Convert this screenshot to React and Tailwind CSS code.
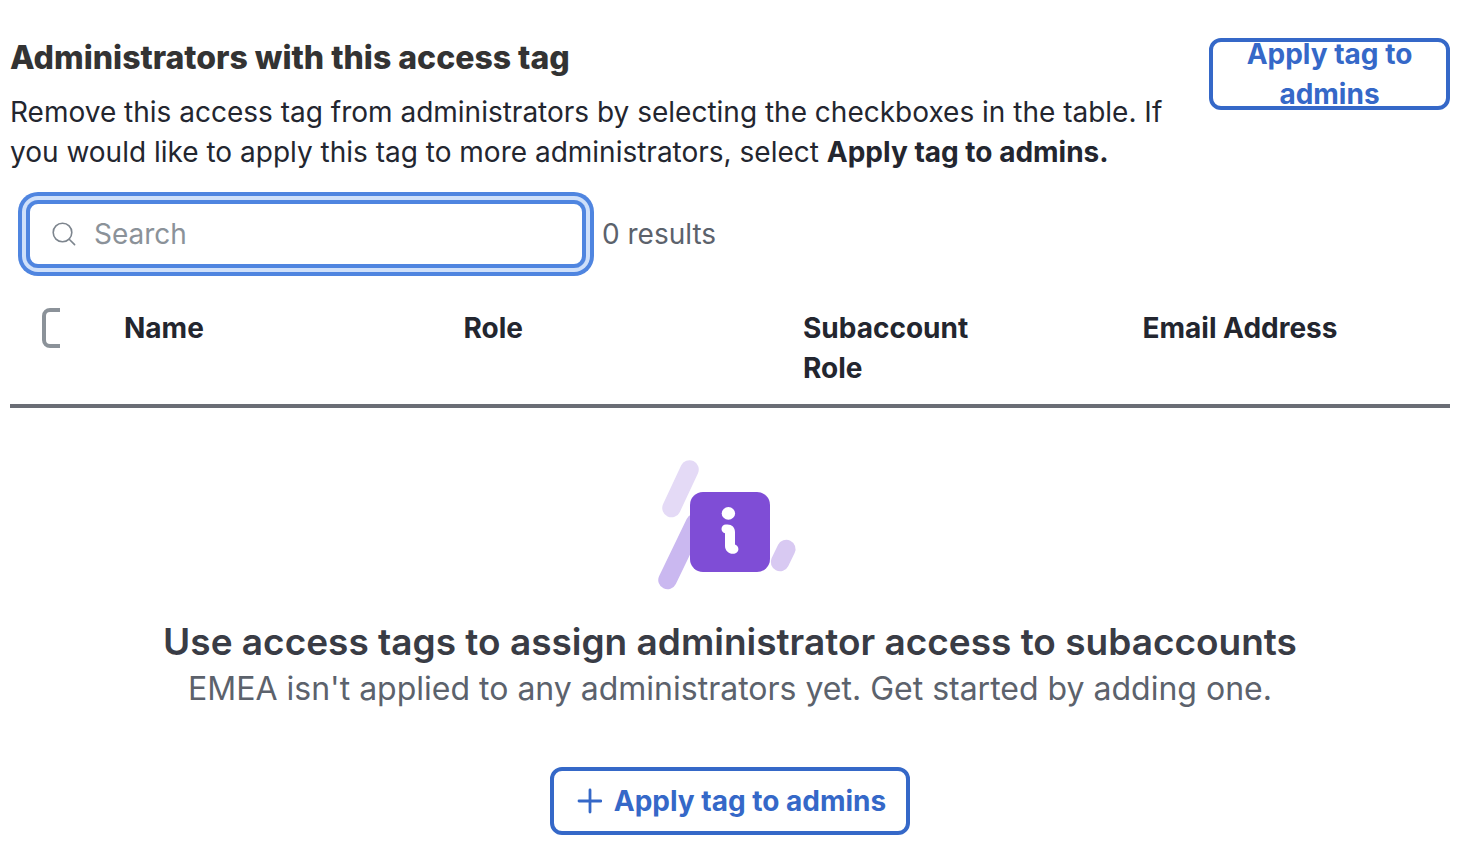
const COLUMNS = ["Name", "Role", "Subaccount Role", "Email Address"];

function SearchIcon() {
  return (
    <svg width="26" height="26" viewBox="0 0 26 26" fill="none" stroke="#7d858e" strokeWidth="1.6" className="shrink-0" aria-hidden="true">
      <circle cx="10.5" cy="11.5" r="9.3" />
      <path d="M17.2 18.2 L22.6 23.6" strokeLinecap="round" />
    </svg>
  );
}

function PlusIcon() {
  return (
    <svg width="26" height="26" viewBox="0 0 26 26" fill="none" stroke="currentColor" strokeWidth="2.8" strokeLinecap="round" aria-hidden="true">
      <path d="M14 2 V24 M3 13 H25" />
    </svg>
  );
}

function InfoIllustration() {
  return (
    <svg width="156" height="132" viewBox="0 0 156 132" fill="none" strokeLinecap="round" aria-hidden="true">
      <path d="M37.5 9.5 L19.5 48" stroke="#e4daf6" strokeWidth="18.5" />
      <path d="M43 63 L15.5 120" stroke="#cab8f0" strokeWidth="18.5" />
      <path d="M134.3 89 L128 102" stroke="#d8c9f2" strokeWidth="18.5" />
      <rect x="38" y="32" width="80" height="80" rx="13" fill="#7f4dd6" />
      <ellipse cx="76.4" cy="53.4" rx="6.7" ry="6.3" fill="#fff" />
      <path
        d="M73.9 64.4 H75.5 C80 64.4 83 67.5 83 72 V84.6 C85 85.2 86.4 87 86.4 89 C86.4 91.8 84 93.8 81 93.8 C76.5 93.8 73 90.5 73 86 V73.3 C71 73 69.5 71.2 69.5 69 C69.5 66.4 71.4 64.4 73.9 64.4 Z"
        fill="#fff"
      />
    </svg>
  );
}

function EmptyState() {
  return (
    <section className="flex flex-col items-center text-center pt-13">
      <InfoIllustration />
      <h3 className="mt-[27px] text-[37px] leading-[46px] font-semibold text-[#393c45]">
        Use access tags to assign administrator access to subaccounts
      </h3>
      <p className="text-[32px] leading-[48px] text-[#5c626c]">
        EMEA isn't applied to any administrators yet. Get started by adding one.
      </p>
      <button
        type="button"
        className="mt-[54px] flex h-17 items-center gap-3 rounded-xl border-4 border-[#3568c8] bg-white pr-5 pl-[22px] text-[28px] leading-10 font-bold text-[#3568c8]"
      >
        <PlusIcon />
        Apply tag to admins
      </button>
    </section>
  );
}

export default function App() {
  return (
    <main className="bg-white pt-[38px] pr-[22px] pb-3 pl-[10px] font-['Inter',sans-serif] text-[28px] leading-10 text-[#23262f]">
      <header className="flex items-start justify-between gap-10">
        <div>
          <h2 className="text-[32px] leading-10 font-extrabold text-[#333333]">Administrators with this access tag</h2>
          <p className="mt-3.5">
            Remove this access tag from administrators by selecting the checkboxes in the table. If you would like to
            apply this tag to more administrators, select <b>Apply tag to admins.</b>
          </p>
        </div>
        <button
          type="button"
          className="flex h-18 w-[241px] shrink-0 items-center justify-center rounded-xl border-4 border-[#3568c8] bg-white px-5 font-bold text-[#3568c8]"
        >
          Apply tag to admins
        </button>
      </header>

      <div className="mt-7 ml-4 flex items-center gap-4">
        <label className="flex h-17 w-[560px] items-center gap-4 rounded-xl border-4 border-[#4f85e0] px-[22px] shadow-[0_0_0_4px_#cfe0fa,0_0_0_8px_#4f85e0]">
          <SearchIcon />
          <input
            type="search"
            placeholder="Search"
            aria-label="Search administrators"
            className="min-w-0 flex-1 outline-none placeholder:text-[#8b9299]"
          />
        </label>
        <span className="text-[#5c626c]">0 results</span>
      </div>

      <table className="mt-8 w-full table-fixed border-collapse text-left">
        <thead>
          <tr className="border-b-4 border-[#6a6d75] align-top">
            <th className="w-[82px] pt-2 pl-8">
              <span className="block h-10 w-[18px] overflow-hidden">
                <input
                  type="checkbox"
                  aria-label="Select all administrators"
                  className="block size-10 appearance-none rounded-lg border-4 border-[#8b9299] bg-white"
                />
              </span>
            </th>
            {COLUMNS.map(name => (
              <th key={name} className="pt-2 pr-26 pb-4 pl-8 font-bold">{name}</th>
            ))}
          </tr>
        </thead>
      </table>

      <EmptyState />
    </main>
  );
}
